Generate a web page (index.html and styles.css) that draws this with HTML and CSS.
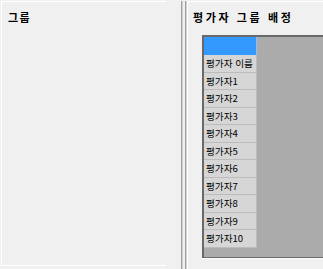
FILE: index.html
```html
<!DOCTYPE html>
<html lang="ko">
<head>
<meta charset="utf-8">
<link rel="stylesheet" href="styles.css">
</head>
<body>
<div class="root">
  <section class="left">
    <div class="title">그룹</div>
  </section>
  <div class="splitter"><span class="bar"></span><span class="bar"></span></div>
  <section class="right">
    <div class="title wide">평가자 그룹 배정</div>
    <div class="grid">
      <div class="col">
        <div class="head"></div>
        <div class="cell">평가자 이름</div>
        <div class="cell">평가자1</div>
        <div class="cell">평가자2</div>
        <div class="cell">평가자3</div>
        <div class="cell">평가자4</div>
        <div class="cell">평가자5</div>
        <div class="cell">평가자6</div>
        <div class="cell">평가자7</div>
        <div class="cell">평가자8</div>
        <div class="cell">평가자9</div>
        <div class="cell">평가자10</div>
      </div>
    </div>
  </section>
</div>
</body>
</html>
```

FILE: styles.css
```css
html, body {
  margin: 0;
  padding: 0;
}
body {
  width: 323px;
  height: 269px;
  overflow: hidden;
  background: #f0f0f0;
  font-family: "Noto Sans CJK KR", "Noto Sans", sans-serif;
  color: #000;
}
.root {
  display: flex;
  height: 269px;
  padding-top: 1px;
  box-sizing: border-box;
}
.left {
  width: 165px;
  margin-left: 1px;
  height: 265px;
  border-top: 1px solid #fff;
  border-left: 1px solid #fff;
  border-bottom: 1px solid #fff;
  padding: 8px 0 0 6px;
  box-sizing: border-box;
}
.title {
  font-size: 11px;
  font-weight: bold;
  line-height: 14px;
  letter-spacing: 1.5px;
}
.title.wide {
  letter-spacing: 2.6px;
  padding-left: 5px;
}
.splitter {
  display: flex;
  gap: 2px;
  margin-left: 15px;
  width: 6px;
}
.bar {
  width: 2px;
  background: #a0a0a0;
  border-right: 1px solid #d0d0d0;
  box-sizing: border-box;
}
.right {
  flex: 1;
  min-width: 0;
  overflow: hidden;
  border-top: 1px solid #fff;
  border-left: 1px solid #fff;
  padding-top: 8px;
  height: 268px;
  box-sizing: border-box;
}
.grid {
  margin: 11px 0 0 14px;
  width: 200px;
  height: 223px;
  background: #ababab;
  border-top: 2px solid #696969;
  border-left: 2px solid #696969;
  border-bottom: 1px solid #696969;
  box-shadow: 0 1px 0 #fff;
  box-sizing: border-box;
}
.col {
  width: 53px;
  display: flex;
  flex-direction: column;
}
.head {
  height: 18px;
  background: #3399ff;
  border-right: 1px solid #8fbef0;
  box-sizing: border-box;
}
.cell {
  height: 17.55px;
  background: #d6d6d6;
  border-bottom: 1px solid #bcbcbc;
  border-right: 1px solid #bcbcbc;
  box-sizing: border-box;
  font-size: 9.6px;
  line-height: 16px;
  padding-left: 2px;
  white-space: nowrap;
  overflow: hidden;
}
```
